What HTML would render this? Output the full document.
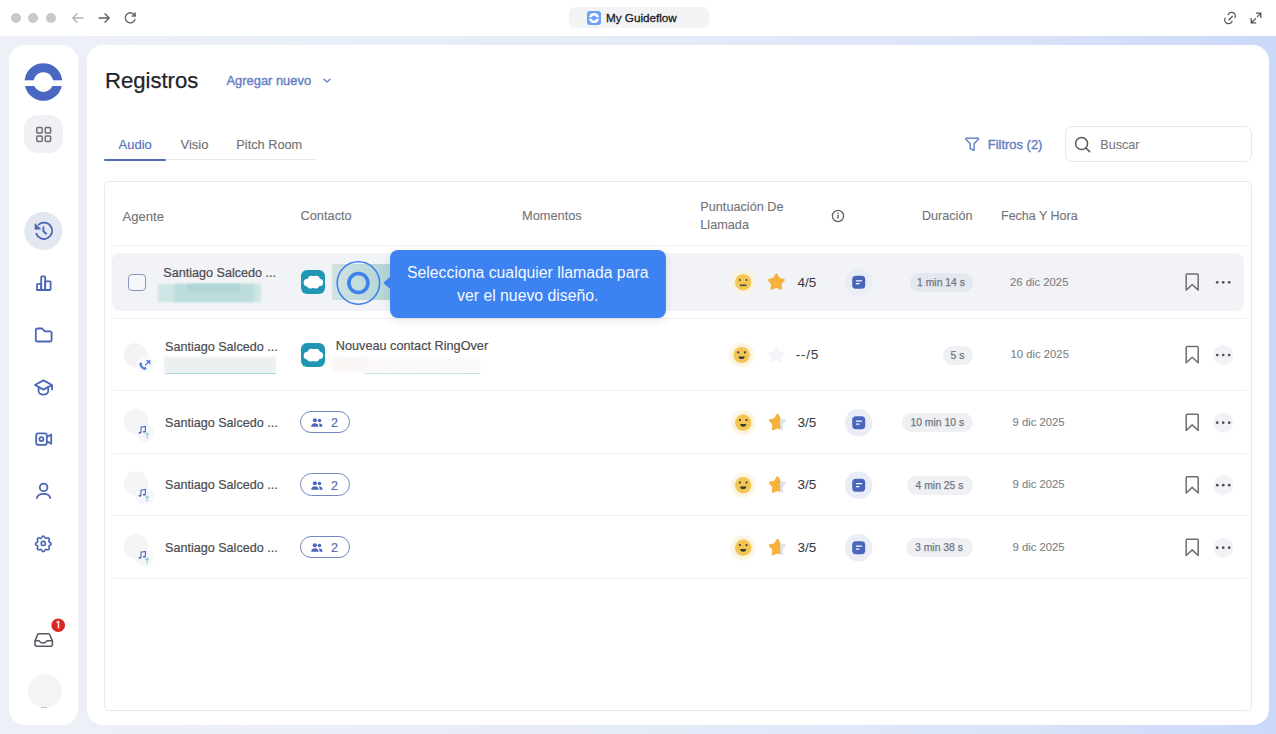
<!DOCTYPE html>
<html><head><meta charset="utf-8">
<style>
*{box-sizing:border-box;margin:0;padding:0}
html,body{width:1276px;height:734px;overflow:hidden;font-family:"Liberation Sans",sans-serif;background:#fff}
.a{position:absolute}
#bg{left:0;top:36px;width:1276px;height:698px;background:linear-gradient(90deg,#edf0f7 0%,#e7ecf8 45%,#dce5f8 75%,#cbd9f9 100%)}
#bar{left:0;top:0;width:1276px;height:36px;background:#fff}
.dot{width:10px;height:10px;border-radius:50%;background:#c9c9cb;top:13px}
#side{left:9px;top:45px;width:69px;height:680px;background:#fff;border-radius:16px}
#main{left:87px;top:45px;width:1182px;height:680px;background:#fff;border-radius:16px}
.t{white-space:nowrap;line-height:1}
#table{left:104px;top:181px;width:1148px;height:530px;border:1px solid #e9eaee;border-radius:5px}
.hd{color:#727377;font-size:12.8px;-webkit-text-stroke:0.1px #727377}
.hl{height:1px;background:#eef0f3}
.name{color:#4b4c51;font-size:12.6px;-webkit-text-stroke:0.2px #4b4c51}
.pill{height:19px;border-radius:10px;background:rgba(190,198,212,0.26);color:#72777f;font-size:10.4px;text-align:center;line-height:19px;-webkit-text-stroke:0.25px #72777f}
.date{color:#7d7f85;font-size:11.3px;-webkit-text-stroke:0.1px #7d7f85}
.score{color:#3a3b3f;-webkit-text-stroke:0.05px #3a3b3f}
.smile{width:26px;height:26px;border-radius:50%;background:#fcf3db}
.note{width:28px;height:28px;border-radius:50%;background:#e7ecf7}
.dots{width:22px;height:22px;border-radius:50%;background:#eff0f3}
</style></head><body>
<div id="bar" class="a"></div>
<div class="a dot" style="left:11px"></div>
<div class="a dot" style="left:28px"></div>
<div class="a dot" style="left:46px"></div>
<div id="bg" class="a"></div>
<div id="side" class="a"></div>
<div id="main" class="a"></div>



<!-- chrome -->
<svg class="a" style="left:0;top:0" width="1276" height="36" viewBox="0 0 1276 36">
 <g fill="none" stroke-linecap="round" stroke-linejoin="round">
  <path d="M83 18 h-10 M77 13.8 l-4.2 4.2 l4.2 4.2" stroke="#b3b3b5" stroke-width="1.3"/>
  <path d="M99 18 h10 M105 13.8 l4.2 4.2 l-4.2 4.2" stroke="#5e5f62" stroke-width="1.3"/>
  <path d="M134.6 15.2 A5 5 0 1 0 135 19.5" stroke="#5e5f62" stroke-width="1.3"/>
  <path d="M135.2 13 v3 h-3" stroke="#5e5f62" stroke-width="1.3"/>
 </g>
 <rect x="569" y="7" width="140" height="21" rx="6" fill="#f2f3f5"/>
 <rect x="587" y="11" width="14" height="14" rx="3" fill="#6ea1f5"/>
 <defs><mask id="gm"><rect x="580" y="0" width="30" height="36" fill="#fff"/><rect x="580" y="17.3" width="30" height="1.6" fill="#000"/></mask></defs>
 <path fill="#fff" fill-rule="evenodd" mask="url(#gm)" d="M594 12.9a5.1 5.1 0 1 0 0.01 0zM594 15.6a2.4 2.4 0 1 1 -0.01 0z"/>
 <g fill="none" stroke="#545457" stroke-width="1.3" stroke-linecap="round">
  <path d="M1228.2 14.6 A3.3 3.3 0 0 1 1235 17.6"/>
  <path d="M1232 21.4 A3.3 3.3 0 0 1 1225 18.2"/>
  <path d="M1229 19.8 l3.4 -3.4"/>
  <path d="M1256.5 13.2 h4.3 v4.3 M1260.6 13.4 l-3.2 3.2 M1255.6 18.6 l-4.2 4.2 M1251.2 18.6 v4.3 h4.3"/>
 </g>
</svg>
<div class="a t" style="left:606px;top:11.6px;font-size:11.7px;color:#1a1a1c;-webkit-text-stroke:0.3px #1a1a1c">My Guideflow</div>

<!-- sidebar icons -->
<svg class="a" style="left:0;top:0" width="90" height="734" viewBox="0 0 90 734">
 <!-- logo -->
 <defs><mask id="lm"><rect x="0" y="0" width="90" height="734" fill="#fff"/><rect x="0" y="80.3" width="90" height="5.7" fill="#000"/></mask></defs>
 <path fill="#4a68c2" fill-rule="evenodd" mask="url(#lm)" d="M43.4 63.2a18.8 18.8 0 1 0 0.01 0zM43.4 72.3a9.8 9.8 0 1 1 -0.01 0z"/>
 <!-- grid button -->
 <rect x="24" y="115" width="39" height="38" rx="14" fill="#f0f1f5"/>
 <g fill="none" stroke="#6c6e73" stroke-width="1.5">
  <rect x="36.8" y="127.6" width="5.4" height="5.4" rx="1.1"/><rect x="45.2" y="127.6" width="5.4" height="5.4" rx="1.1"/>
  <rect x="36.8" y="136" width="5.4" height="5.4" rx="1.1"/><rect x="45.2" y="136" width="5.4" height="5.4" rx="1.1"/>
 </g>
 <!-- history -->
 <circle cx="43.3" cy="231" r="19" fill="#e2e7f2"/>
 <g fill="none" stroke="#4b66b6" stroke-width="1.8" stroke-linecap="round" stroke-linejoin="round">
  <path d="M36.3 233.6 A8.2 8.2 0 1 0 38.6 224.6"/>
  <path d="M43.4 227.2 v4 l2.9 2.5"/>
 </g>
 <path d="M35 223.8 L35.2 229.3 L40.6 228.9z" fill="#4b66b6" stroke="#4b66b6" stroke-width="0.8" stroke-linejoin="round"/>
 <!-- bar chart -->
 <g fill="none" stroke="#4b66b6" stroke-width="1.8" stroke-linejoin="round">
  <path d="M37 290 v-5.2 a1 1 0 0 1 1 -1 h3.2 v6.2 z"/>
  <path d="M41.2 290 v-12.6 a1 1 0 0 1 1 -1 h2 a1 1 0 0 1 1 1 v12.6 z"/>
  <path d="M45.2 290 v-8.6 h4.4 a1 1 0 0 1 1 1 v6.6 a1 1 0 0 1 -1 1 z"/>
  <path d="M38 290 h11.6"/>
 </g>
 <!-- folder -->
 <path fill="none" stroke="#4b66b6" stroke-width="1.8" stroke-linejoin="round" d="M37.6 328.5 h4.6 l2.6 2.8 h5 a1.8 1.8 0 0 1 1.8 1.8 v6.6 a1.8 1.8 0 0 1 -1.8 1.8 h-12.2 a1.8 1.8 0 0 1 -1.8 -1.8 v-9.4 a1.8 1.8 0 0 1 1.8 -1.8z"/>
 <!-- school -->
 <g fill="none" stroke="#4b66b6" stroke-width="1.8" stroke-linejoin="round" stroke-linecap="round">
  <path d="M52 385 L43.4 380.4 L35 385 L43.4 389.6 L52 385 v4.6"/>
  <path d="M38.6 387 v4.6 a4.8 3 0 0 0 9.6 0 v-4.6"/>
 </g>
 <!-- video -->
 <g fill="none" stroke="#4b66b6" stroke-width="1.8" stroke-linejoin="round">
  <rect x="36.2" y="433.3" width="10.6" height="11.6" rx="2.2"/>
  <path d="M46.8 437 l4.4 -2.6 v9.4 l-4.4 -2.6"/>
  <circle cx="41.4" cy="439.1" r="2"/>
 </g>
 <!-- user -->
 <g fill="none" stroke="#4b66b6" stroke-width="1.8" stroke-linecap="round">
  <circle cx="43.6" cy="487.4" r="3.8"/>
  <path d="M36.9 498 a6.8 5 0 0 1 13.4 0"/>
 </g>
 <!-- gear -->
 <g fill="none" stroke="#4b66b6" stroke-width="2.1" stroke-linejoin="round" transform="translate(43.3 543.4) scale(0.8) translate(-43.3 -544.1)">
  <path d="M41.5 536.3 a1.9 1.9 0 0 1 3.6 0 a1.9 1.9 0 0 0 2.8 1.2 a1.9 1.9 0 0 1 2.6 2.6 a1.9 1.9 0 0 0 1.2 2.8 a1.9 1.9 0 0 1 0 3.6 a1.9 1.9 0 0 0 -1.2 2.8 a1.9 1.9 0 0 1 -2.6 2.6 a1.9 1.9 0 0 0 -2.8 1.2 a1.9 1.9 0 0 1 -3.6 0 a1.9 1.9 0 0 0 -2.8 -1.2 a1.9 1.9 0 0 1 -2.6 -2.6 a1.9 1.9 0 0 0 -1.2 -2.8 a1.9 1.9 0 0 1 0 -3.6 a1.9 1.9 0 0 0 1.2 -2.8 a1.9 1.9 0 0 1 2.6 -2.6 a1.9 1.9 0 0 0 2.8 -1.2z"/>
  <circle cx="43.3" cy="544.1" r="2.6"/>
 </g>
 <!-- inbox -->
 <g fill="none" stroke="#56585e" stroke-width="1.6" stroke-linejoin="round">
  <path d="M35 641 l2.6 -6.2 a1.6 1.6 0 0 1 1.5 -1 h9.2 a1.6 1.6 0 0 1 1.5 1 l2.6 6.2 v3.6 a1.6 1.6 0 0 1 -1.6 1.6 h-14.2 a1.6 1.6 0 0 1 -1.6 -1.6z"/>
  <path d="M35 640.8 h3.6 q0.8 0 1.3 0.8 q1 1.4 2.6 1.4 h1.2 q1.6 0 2.6 -1.4 q0.5 -0.8 1.3 -0.8 h4.8"/>
 </g>
 <circle cx="58.2" cy="625.2" r="6.8" fill="#d9281f"/>
 <path d="M56.6 622.6 l1.9 -1.2 v7.2" fill="none" stroke="#fbe9e8" stroke-width="1.5" stroke-linejoin="round"/>
 <!-- avatar -->
 <circle cx="45" cy="691" r="17" fill="#f4f4f4"/><path d="M41 707.6 h6" stroke="#9a9a9a" stroke-width="1" opacity="0.6"/>
</svg>

<!-- header -->
<div class="a t" style="left:105px;top:70px;font-size:22.1px;color:#222428;-webkit-text-stroke:0.25px #222428">Registros</div>
<div class="a t" style="left:226.5px;top:75px;font-size:12.9px;color:#6680c4;-webkit-text-stroke:0.4px #6680c4">Agregar nuevo</div>

<div class="a t" style="left:118.5px;top:138px;font-size:13px;color:#5270bd;-webkit-text-stroke:0.15px #5270bd">Audio</div>
<div class="a t" style="left:180.5px;top:138px;font-size:13px;color:#707277;-webkit-text-stroke:0.15px #707277">Visio</div>
<div class="a t" style="left:236.3px;top:138.6px;font-size:12.75px;color:#707277;-webkit-text-stroke:0.15px #707277">Pitch Room</div>
<div class="a" style="left:104px;top:159px;width:212px;height:1px;background:#e9eaee"></div>
<div class="a" style="left:104px;top:158.5px;width:62px;height:2.8px;background:#4f6cbc;border-radius:2px"></div>

<div class="a t" style="left:987.8px;top:138.8px;font-size:12.95px;color:#6680c4;-webkit-text-stroke:0.4px #6680c4">Filtros (2)</div>
<div class="a" style="left:1065px;top:126px;width:187px;height:36px;border:1px solid #e9eaed;border-radius:7px"></div>
<div class="a t" style="left:1100.3px;top:139px;font-size:12.6px;color:#77797e;-webkit-text-stroke:0.1px #77797e">Buscar</div>


<svg class="a" style="left:900px;top:60px" width="376" height="120" viewBox="900 60 376 120">
 <g fill="none" stroke="#6a84c4" stroke-width="1.5" stroke-linejoin="round">
  <path d="M966 138.2 h12 a0.6 0.6 0 0 1 0.4 1 l-4.3 4.6 v6.4 l-3.9 -1.5 v-4.9 l-4.3 -4.6 a0.6 0.6 0 0 1 0.4 -1z"/>
 </g>
 <g fill="none" stroke="#58595d" stroke-width="1.5" stroke-linecap="round">
  <circle cx="1081.6" cy="143.5" r="6"/>
  <path d="M1086 148 l3.6 3.6"/>
 </g>
</svg>
<svg class="a" style="left:320px;top:75px" width="14" height="10" viewBox="320 75 14 10">
 <path d="M324 79.2 l3 2.8 l3 -2.8" fill="none" stroke="#6a84c4" stroke-width="1.4" stroke-linecap="round" stroke-linejoin="round"/>
</svg>

<!-- table -->
<div id="table" class="a"></div>
<div class="a t hd" style="left:122.5px;top:209.7px;font-size:13.1px">Agente</div>
<div class="a t hd" style="left:300.5px;top:209.7px">Contacto</div>
<div class="a t hd" style="left:522px;top:209.7px">Momentos</div>
<div class="a t hd" style="left:700.3px;top:201.3px;font-size:12.7px">Puntuación De</div>
<div class="a t hd" style="left:700.3px;top:219.3px;font-size:12.7px">Llamada</div>
<div class="a t hd" style="left:922px;top:209.7px;font-size:12.6px">Duración</div>
<div class="a t hd" style="left:1001px;top:209.7px;font-size:12.5px">Fecha Y Hora</div>
<div class="a hl" style="left:113px;top:245px;width:1134px"></div>

<!-- row1 -->
<div class="a" style="left:112px;top:252.5px;width:1132px;height:58.7px;background:#f2f3f7;border-radius:8px"></div>
<div class="a hl" style="left:113px;top:318px;width:1134px"></div>
<div class="a hl" style="left:113px;top:390px;width:1134px"></div>
<div class="a hl" style="left:113px;top:453px;width:1134px"></div>
<div class="a hl" style="left:113px;top:515px;width:1134px"></div>
<div class="a hl" style="left:113px;top:578px;width:1134px"></div>
<div class="a t name" style="left:163.3px;top:266.8px">Santiago Salcedo ...</div>
<div class="a t name" style="left:165px;top:340.6px">Santiago Salcedo ...</div>
<div class="a t name" style="left:165px;top:416.6px">Santiago Salcedo ...</div>
<div class="a t name" style="left:165px;top:479.1px">Santiago Salcedo ...</div>
<div class="a t name" style="left:165px;top:541.8px">Santiago Salcedo ...</div>
<div class="a" style="left:128px;top:273.6px;width:17.6px;height:17px;border:1.5px solid #8894c0;border-radius:4px;background:#f6f7fb"></div>
<div class="a" style="left:158px;top:283.5px;width:102.5px;height:18.5px;background:#cde6e5;filter:blur(0.8px)"></div>
<div class="a" style="left:173.5px;top:283.5px;width:80px;height:18px;background:#bddddc;filter:blur(1px)"></div>
<div class="a" style="left:187px;top:284px;width:53px;height:7.5px;background:#afd5d4;filter:blur(1.2px)"></div>
<svg class="a" style="left:300.5px;top:270px" width="24" height="24" viewBox="0 0 24 24"><rect width="24" height="24" rx="6" fill="#1f97b3"/><g fill="#fff"><circle cx="6.6" cy="12.6" r="3.9"/><circle cx="10.6" cy="9.6" r="3.9"/><circle cx="15.2" cy="9.4" r="3.6"/><circle cx="18.4" cy="12.4" r="3.7"/><circle cx="14.6" cy="14.6" r="3.9"/><circle cx="9.6" cy="14.8" r="3.8"/></g></svg>
<div class="a" style="left:332px;top:264px;width:60px;height:36px;background:linear-gradient(90deg,#d3e3e4 0%,#c3dcdc 40%,#b2d4d4 100%)"></div>
<svg class="a" style="left:330px;top:255px" width="60" height="56" viewBox="330 255 60 56"><circle cx="358.4" cy="283" r="21.2" fill="none" stroke="#3e80ee" stroke-width="1.6"/><circle cx="358.4" cy="283" r="9.5" fill="none" stroke="#3e80ee" stroke-width="3.6"/></svg>
<div class="a" style="left:123.5px;top:343px;width:23px;height:24px;border-radius:50%;background:#f3f3f4"></div>
<div class="a" style="left:136px;top:355px;width:18px;height:18px;border-radius:50%;background:#f8f9fc"></div>
<svg class="a" style="left:137px;top:357px" width="16" height="16" viewBox="0 0 16 16"><path fill="#4d7bd8" d="M2.6 6.2c.2-.5.7-.7 1.2-.5l.9.4c.4.2.6.7.4 1.1l-.4.7c.6 1.1 1.4 1.9 2.5 2.5l.7-.4c.4-.2.9-.1 1.1.4l.4.9c.2.5 0 1-.5 1.2-1.2.4-2.5.1-3.6-.7-1.2-.8-2.1-2-2.6-3.2-.3-.8-.3-1.6-.1-2.4z"/><path d="M8.6 8 L12.4 4.2 M9.6 3.8 h3.1 v3.1" fill="none" stroke="#4d7bd8" stroke-width="1.2" stroke-linecap="round"/></svg>
<div class="a" style="left:164px;top:357px;width:112px;height:16px;background:#ebf0f1;filter:blur(1px)"></div>
<div class="a" style="left:165px;top:372.5px;width:111px;height:1.5px;background:#a9d8dc"></div>
<svg class="a" style="left:300.5px;top:343px" width="24" height="24" viewBox="0 0 24 24"><rect width="24" height="24" rx="6" fill="#1f97b3"/><g fill="#fff"><circle cx="6.6" cy="12.6" r="3.9"/><circle cx="10.6" cy="9.6" r="3.9"/><circle cx="15.2" cy="9.4" r="3.6"/><circle cx="18.4" cy="12.4" r="3.7"/><circle cx="14.6" cy="14.6" r="3.9"/><circle cx="9.6" cy="14.8" r="3.8"/></g></svg>
<div class="a t name" style="left:335.8px;top:340.3px;font-size:12.7px">Nouveau contact RingOver</div>
<div class="a" style="left:332px;top:357px;width:148px;height:16px;background:linear-gradient(90deg,#fcf6f5,#fbf9f9 40%,#f9fafa);filter:blur(1px)"></div>
<div class="a" style="left:364px;top:372.5px;width:116px;height:1.5px;background:#c4e6e8"></div>
<div class="a" style="left:123.5px;top:408.8px;width:24px;height:25px;border-radius:50%;background:#f5f5f6"></div>
<div class="a" style="left:135.5px;top:424px;width:18px;height:18px;border-radius:50%;background:#f6f7fb"></div>
<svg class="a" style="left:136px;top:424px" width="16" height="16" viewBox="0 0 16 16"><path d="M5 8.6 V3.1 L9.4 2.4 V7.7" fill="none" stroke="#4f6bc0" stroke-width="1.1"/><ellipse cx="3.9" cy="8.7" rx="1.35" ry="1.05" fill="#4f6bc0"/><ellipse cx="8.3" cy="7.8" rx="1.35" ry="1.05" fill="#4f6bc0"/><path d="M11.1 14.7 V9 M9.2 10.9 L11.1 9 L13 10.9" fill="none" stroke="#8dd4ca" stroke-width="1.2"/></svg>
<div class="a" style="left:300px;top:410.7px;width:50px;height:22.8px;border:1.4px solid #7588c0;border-radius:12px"></div>
<svg class="a" style="left:310.5px;top:418.0px" width="12" height="9.5" viewBox="0 0 13 10"><circle cx="4.2" cy="2.3" r="2.2" fill="#4a66bb"/><path d="M0.2 9.4 c0-2.4 1.6-3.8 4-3.8 s4 1.4 4 3.8z" fill="#4a66bb"/><circle cx="9.2" cy="2.6" r="1.9" fill="#4a66bb"/><path d="M8.6 5.8 c2.4-.2 4 1 4 3.6h-3.2c0-1.4-.3-2.6-.8-3.6z" fill="#4a66bb"/></svg>
<div class="a t" style="left:331px;top:417.4px;font-size:12.6px;color:#5a6cab;-webkit-text-stroke:0.2px #5a6cab">2</div>
<div class="a" style="left:123.5px;top:471.3px;width:24px;height:25px;border-radius:50%;background:#f5f5f6"></div>
<div class="a" style="left:135.5px;top:486.5px;width:18px;height:18px;border-radius:50%;background:#f6f7fb"></div>
<svg class="a" style="left:136px;top:486.5px" width="16" height="16" viewBox="0 0 16 16"><path d="M5 8.6 V3.1 L9.4 2.4 V7.7" fill="none" stroke="#4f6bc0" stroke-width="1.1"/><ellipse cx="3.9" cy="8.7" rx="1.35" ry="1.05" fill="#4f6bc0"/><ellipse cx="8.3" cy="7.8" rx="1.35" ry="1.05" fill="#4f6bc0"/><path d="M11.1 14.7 V9 M9.2 10.9 L11.1 9 L13 10.9" fill="none" stroke="#8dd4ca" stroke-width="1.2"/></svg>
<div class="a" style="left:300px;top:473.2px;width:50px;height:22.8px;border:1.4px solid #7588c0;border-radius:12px"></div>
<svg class="a" style="left:310.5px;top:480.5px" width="12" height="9.5" viewBox="0 0 13 10"><circle cx="4.2" cy="2.3" r="2.2" fill="#4a66bb"/><path d="M0.2 9.4 c0-2.4 1.6-3.8 4-3.8 s4 1.4 4 3.8z" fill="#4a66bb"/><circle cx="9.2" cy="2.6" r="1.9" fill="#4a66bb"/><path d="M8.6 5.8 c2.4-.2 4 1 4 3.6h-3.2c0-1.4-.3-2.6-.8-3.6z" fill="#4a66bb"/></svg>
<div class="a t" style="left:331px;top:479.9px;font-size:12.6px;color:#5a6cab;-webkit-text-stroke:0.2px #5a6cab">2</div>
<div class="a" style="left:123.5px;top:533.8px;width:24px;height:25px;border-radius:50%;background:#f5f5f6"></div>
<div class="a" style="left:135.5px;top:549px;width:18px;height:18px;border-radius:50%;background:#f6f7fb"></div>
<svg class="a" style="left:136px;top:549px" width="16" height="16" viewBox="0 0 16 16"><path d="M5 8.6 V3.1 L9.4 2.4 V7.7" fill="none" stroke="#4f6bc0" stroke-width="1.1"/><ellipse cx="3.9" cy="8.7" rx="1.35" ry="1.05" fill="#4f6bc0"/><ellipse cx="8.3" cy="7.8" rx="1.35" ry="1.05" fill="#4f6bc0"/><path d="M11.1 14.7 V9 M9.2 10.9 L11.1 9 L13 10.9" fill="none" stroke="#8dd4ca" stroke-width="1.2"/></svg>
<div class="a" style="left:300px;top:535.7px;width:50px;height:22.8px;border:1.4px solid #7588c0;border-radius:12px"></div>
<svg class="a" style="left:310.5px;top:543.0px" width="12" height="9.5" viewBox="0 0 13 10"><circle cx="4.2" cy="2.3" r="2.2" fill="#4a66bb"/><path d="M0.2 9.4 c0-2.4 1.6-3.8 4-3.8 s4 1.4 4 3.8z" fill="#4a66bb"/><circle cx="9.2" cy="2.6" r="1.9" fill="#4a66bb"/><path d="M8.6 5.8 c2.4-.2 4 1 4 3.6h-3.2c0-1.4-.3-2.6-.8-3.6z" fill="#4a66bb"/></svg>
<div class="a t" style="left:331px;top:542.4px;font-size:12.6px;color:#5a6cab;-webkit-text-stroke:0.2px #5a6cab">2</div>
<svg class="a" style="left:700px;top:240px" width="576" height="340" viewBox="700 240 576 340"><defs><radialGradient id="glow"><stop offset="0.55" stop-color="#faf1d8"/><stop offset="0.8" stop-color="#fbf3de" stop-opacity="0.8"/><stop offset="1" stop-color="#fdf6e6" stop-opacity="0"/></radialGradient></defs>
<circle cx="743.2" cy="282.3" r="14" fill="url(#glow)"/><circle cx="743.2" cy="282.3" r="8.1" fill="#f3c552"/><circle cx="739.9000000000001" cy="280.1" r="1" fill="#4a4a4a"/><circle cx="746.5" cy="280.1" r="1" fill="#4a4a4a"/><rect x="740.0" y="284.5" width="6.4" height="1.6" fill="#4a4a4a"/>
<polygon points="776.30,274.40 778.95,278.76 783.91,279.93 780.58,283.79 781.00,288.87 776.30,286.90 771.60,288.87 772.02,283.79 768.69,279.93 773.65,278.76" fill="#f7b13d" stroke="#f7b13d" stroke-width="2" stroke-linejoin="round"/>
<circle cx="858.6" cy="282.3" r="13.8" fill="#eaedf6"/><rect x="852.2" y="275.8" width="13" height="13" rx="3.6" fill="#4a66bb"/><path d="M856.4 280.8 h5.2 M856.4 283.7 h2.6" stroke="#fff" stroke-width="1.25" stroke-linecap="round"/>
<path d="M1186.2 274.7 a0.8 0.8 0 0 1 0.8 -0.8 h10.4 a0.8 0.8 0 0 1 0.8 0.8 v15.4 l-6 -5.6 l-6 5.6z" fill="none" stroke="#6e6f73" stroke-width="1.5" stroke-linejoin="round"/>
<circle cx="1217.2" cy="282.3" r="1.35" fill="#505155"/>
<circle cx="1223.2" cy="282.3" r="1.35" fill="#505155"/>
<circle cx="1229.2" cy="282.3" r="1.35" fill="#505155"/>
<circle cx="741.6" cy="355" r="14" fill="url(#glow)"/><circle cx="741.6" cy="355" r="8.1" fill="#f3c552"/><circle cx="738.3" cy="352.4" r="1.05" fill="#3b3b3b"/><circle cx="744.9" cy="352.4" r="1.05" fill="#3b3b3b"/><path d="M738.6 356.4 h6 a3 2.6 0 0 1 -6 0z" fill="#3b3b3b"/>
<polygon points="776.30,347.10 778.95,351.46 783.91,352.63 780.58,356.49 781.00,361.57 776.30,359.60 771.60,361.57 772.02,356.49 768.69,352.63 773.65,351.46" fill="#f5f6f9" stroke="#f5f6f9" stroke-width="2" stroke-linejoin="round"/>
<path d="M1186.2 347.4 a0.8 0.8 0 0 1 0.8 -0.8 h10.4 a0.8 0.8 0 0 1 0.8 0.8 v15.4 l-6 -5.6 l-6 5.6z" fill="none" stroke="#6e6f73" stroke-width="1.5" stroke-linejoin="round"/>
<circle cx="1223.3" cy="355" r="10" fill="#f1f2f5"/>
<circle cx="1217.2" cy="355" r="1.35" fill="#505155"/>
<circle cx="1223.2" cy="355" r="1.35" fill="#505155"/>
<circle cx="1229.2" cy="355" r="1.35" fill="#505155"/>
<circle cx="743.2" cy="422.7" r="14" fill="url(#glow)"/><circle cx="743.2" cy="422.7" r="8.1" fill="#f3c552"/><circle cx="739.9000000000001" cy="420.09999999999997" r="1.05" fill="#3b3b3b"/><circle cx="746.5" cy="420.09999999999997" r="1.05" fill="#3b3b3b"/><path d="M740.2 424.09999999999997 h6 a3 2.6 0 0 1 -6 0z" fill="#3b3b3b"/>
<defs><clipPath id="hc423"><rect x="766" y="413.2" width="14.2" height="20"/></clipPath></defs><polygon points="777.50,414.80 780.15,419.16 785.11,420.33 781.78,424.19 782.20,429.27 777.50,427.30 772.80,429.27 773.22,424.19 769.89,420.33 774.85,419.16" fill="#dfe4ef" stroke="#dfe4ef" stroke-width="2" stroke-linejoin="round"/><polygon points="777.50,414.80 780.15,419.16 785.11,420.33 781.78,424.19 782.20,429.27 777.50,427.30 772.80,429.27 773.22,424.19 769.89,420.33 774.85,419.16" fill="#f7b13d" stroke="#f7b13d" stroke-width="2" stroke-linejoin="round" clip-path="url(#hc423)"/>
<circle cx="858.6" cy="422.7" r="13.8" fill="#eaedf6"/><rect x="852.2" y="416.2" width="13" height="13" rx="3.6" fill="#4a66bb"/><path d="M856.4 421.2 h5.2 M856.4 424.09999999999997 h2.6" stroke="#fff" stroke-width="1.25" stroke-linecap="round"/>
<path d="M1186.2 415.09999999999997 a0.8 0.8 0 0 1 0.8 -0.8 h10.4 a0.8 0.8 0 0 1 0.8 0.8 v15.4 l-6 -5.6 l-6 5.6z" fill="none" stroke="#6e6f73" stroke-width="1.5" stroke-linejoin="round"/>
<circle cx="1223.3" cy="422.7" r="10" fill="#f1f2f5"/>
<circle cx="1217.2" cy="422.7" r="1.35" fill="#505155"/>
<circle cx="1223.2" cy="422.7" r="1.35" fill="#505155"/>
<circle cx="1229.2" cy="422.7" r="1.35" fill="#505155"/>
<circle cx="743.2" cy="485.2" r="14" fill="url(#glow)"/><circle cx="743.2" cy="485.2" r="8.1" fill="#f3c552"/><circle cx="739.9000000000001" cy="482.59999999999997" r="1.05" fill="#3b3b3b"/><circle cx="746.5" cy="482.59999999999997" r="1.05" fill="#3b3b3b"/><path d="M740.2 486.59999999999997 h6 a3 2.6 0 0 1 -6 0z" fill="#3b3b3b"/>
<defs><clipPath id="hc485"><rect x="766" y="475.7" width="14.2" height="20"/></clipPath></defs><polygon points="777.50,477.30 780.15,481.66 785.11,482.83 781.78,486.69 782.20,491.77 777.50,489.80 772.80,491.77 773.22,486.69 769.89,482.83 774.85,481.66" fill="#dfe4ef" stroke="#dfe4ef" stroke-width="2" stroke-linejoin="round"/><polygon points="777.50,477.30 780.15,481.66 785.11,482.83 781.78,486.69 782.20,491.77 777.50,489.80 772.80,491.77 773.22,486.69 769.89,482.83 774.85,481.66" fill="#f7b13d" stroke="#f7b13d" stroke-width="2" stroke-linejoin="round" clip-path="url(#hc485)"/>
<circle cx="858.6" cy="485.2" r="13.8" fill="#eaedf6"/><rect x="852.2" y="478.7" width="13" height="13" rx="3.6" fill="#4a66bb"/><path d="M856.4 483.7 h5.2 M856.4 486.59999999999997 h2.6" stroke="#fff" stroke-width="1.25" stroke-linecap="round"/>
<path d="M1186.2 477.59999999999997 a0.8 0.8 0 0 1 0.8 -0.8 h10.4 a0.8 0.8 0 0 1 0.8 0.8 v15.4 l-6 -5.6 l-6 5.6z" fill="none" stroke="#6e6f73" stroke-width="1.5" stroke-linejoin="round"/>
<circle cx="1223.3" cy="485.2" r="10" fill="#f1f2f5"/>
<circle cx="1217.2" cy="485.2" r="1.35" fill="#505155"/>
<circle cx="1223.2" cy="485.2" r="1.35" fill="#505155"/>
<circle cx="1229.2" cy="485.2" r="1.35" fill="#505155"/>
<circle cx="743.2" cy="547.7" r="14" fill="url(#glow)"/><circle cx="743.2" cy="547.7" r="8.1" fill="#f3c552"/><circle cx="739.9000000000001" cy="545.1" r="1.05" fill="#3b3b3b"/><circle cx="746.5" cy="545.1" r="1.05" fill="#3b3b3b"/><path d="M740.2 549.1 h6 a3 2.6 0 0 1 -6 0z" fill="#3b3b3b"/>
<defs><clipPath id="hc548"><rect x="766" y="538.2" width="14.2" height="20"/></clipPath></defs><polygon points="777.50,539.80 780.15,544.16 785.11,545.33 781.78,549.19 782.20,554.27 777.50,552.30 772.80,554.27 773.22,549.19 769.89,545.33 774.85,544.16" fill="#dfe4ef" stroke="#dfe4ef" stroke-width="2" stroke-linejoin="round"/><polygon points="777.50,539.80 780.15,544.16 785.11,545.33 781.78,549.19 782.20,554.27 777.50,552.30 772.80,554.27 773.22,549.19 769.89,545.33 774.85,544.16" fill="#f7b13d" stroke="#f7b13d" stroke-width="2" stroke-linejoin="round" clip-path="url(#hc548)"/>
<circle cx="858.6" cy="547.7" r="13.8" fill="#eaedf6"/><rect x="852.2" y="541.2" width="13" height="13" rx="3.6" fill="#4a66bb"/><path d="M856.4 546.2 h5.2 M856.4 549.1 h2.6" stroke="#fff" stroke-width="1.25" stroke-linecap="round"/>
<path d="M1186.2 540.1 a0.8 0.8 0 0 1 0.8 -0.8 h10.4 a0.8 0.8 0 0 1 0.8 0.8 v15.4 l-6 -5.6 l-6 5.6z" fill="none" stroke="#6e6f73" stroke-width="1.5" stroke-linejoin="round"/>
<circle cx="1223.3" cy="547.7" r="10" fill="#f1f2f5"/>
<circle cx="1217.2" cy="547.7" r="1.35" fill="#505155"/>
<circle cx="1223.2" cy="547.7" r="1.35" fill="#505155"/>
<circle cx="1229.2" cy="547.7" r="1.35" fill="#505155"/>
</svg>
<div class="a t score" style="left:797.5px;top:275.5px;font-size:13.5px">4/5</div>
<div class="a pill" style="left:909.5px;top:272.9px;width:63.0px">1 min 14 s</div>
<div class="a t date" style="left:1010px;top:276.5px">26 dic 2025</div>
<div class="a t score" style="left:795.8px;top:348.2px;font-size:13.5px;letter-spacing:0.7px">--/5</div>
<div class="a pill" style="left:942.5px;top:345.6px;width:30.0px">5 s</div>
<div class="a t date" style="left:1010.5px;top:349.2px">10 dic 2025</div>
<div class="a t score" style="left:797.5px;top:415.9px;font-size:13.5px">3/5</div>
<div class="a pill" style="left:902px;top:413.3px;width:70.5px">10 min 10 s</div>
<div class="a t date" style="left:1012.5px;top:416.9px">9 dic 2025</div>
<div class="a t score" style="left:797.5px;top:478.4px;font-size:13.5px">3/5</div>
<div class="a pill" style="left:906.5px;top:475.8px;width:66.0px">4 min 25 s</div>
<div class="a t date" style="left:1012.5px;top:479.4px">9 dic 2025</div>
<div class="a t score" style="left:797.5px;top:540.9px;font-size:13.5px">3/5</div>
<div class="a pill" style="left:905.5px;top:538.3px;width:67.0px">3 min 38 s</div>
<div class="a t date" style="left:1012.5px;top:541.9px">9 dic 2025</div>
<svg class="a" style="left:830px;top:208px" width="16" height="16" viewBox="0 0 16 16"><circle cx="8" cy="8" r="5.6" fill="none" stroke="#5d5f64" stroke-width="1.3"/><path d="M8 7.2 v3" stroke="#5d5f64" stroke-width="1.3" stroke-linecap="round"/><circle cx="8" cy="5.3" r="0.8" fill="#5d5f64"/></svg>
<!-- tooltip -->
<div class="a" style="left:389.5px;top:250px;width:276.5px;height:67.5px;background:#3c82f0;border-radius:8px;box-shadow:0 3px 10px rgba(30,40,70,0.10)"></div>
<svg class="a" style="left:380px;top:274px" width="12" height="18" viewBox="380 274 12 18"><path d="M390.5 277.2 L384.6 282.1 a1 1 0 0 0 0 1.6 L390.5 288.6z" fill="#3c82f0" stroke="#3c82f0" stroke-width="1" stroke-linejoin="round"/></svg>
<div class="a t" style="left:389.5px;top:260.6px;width:276.5px;text-align:center;color:#f4f8ff;font-size:15.8px;line-height:23.5px">Selecciona cualquier llamada para<br>ver el nuevo diseño.</div>
</body></html>
